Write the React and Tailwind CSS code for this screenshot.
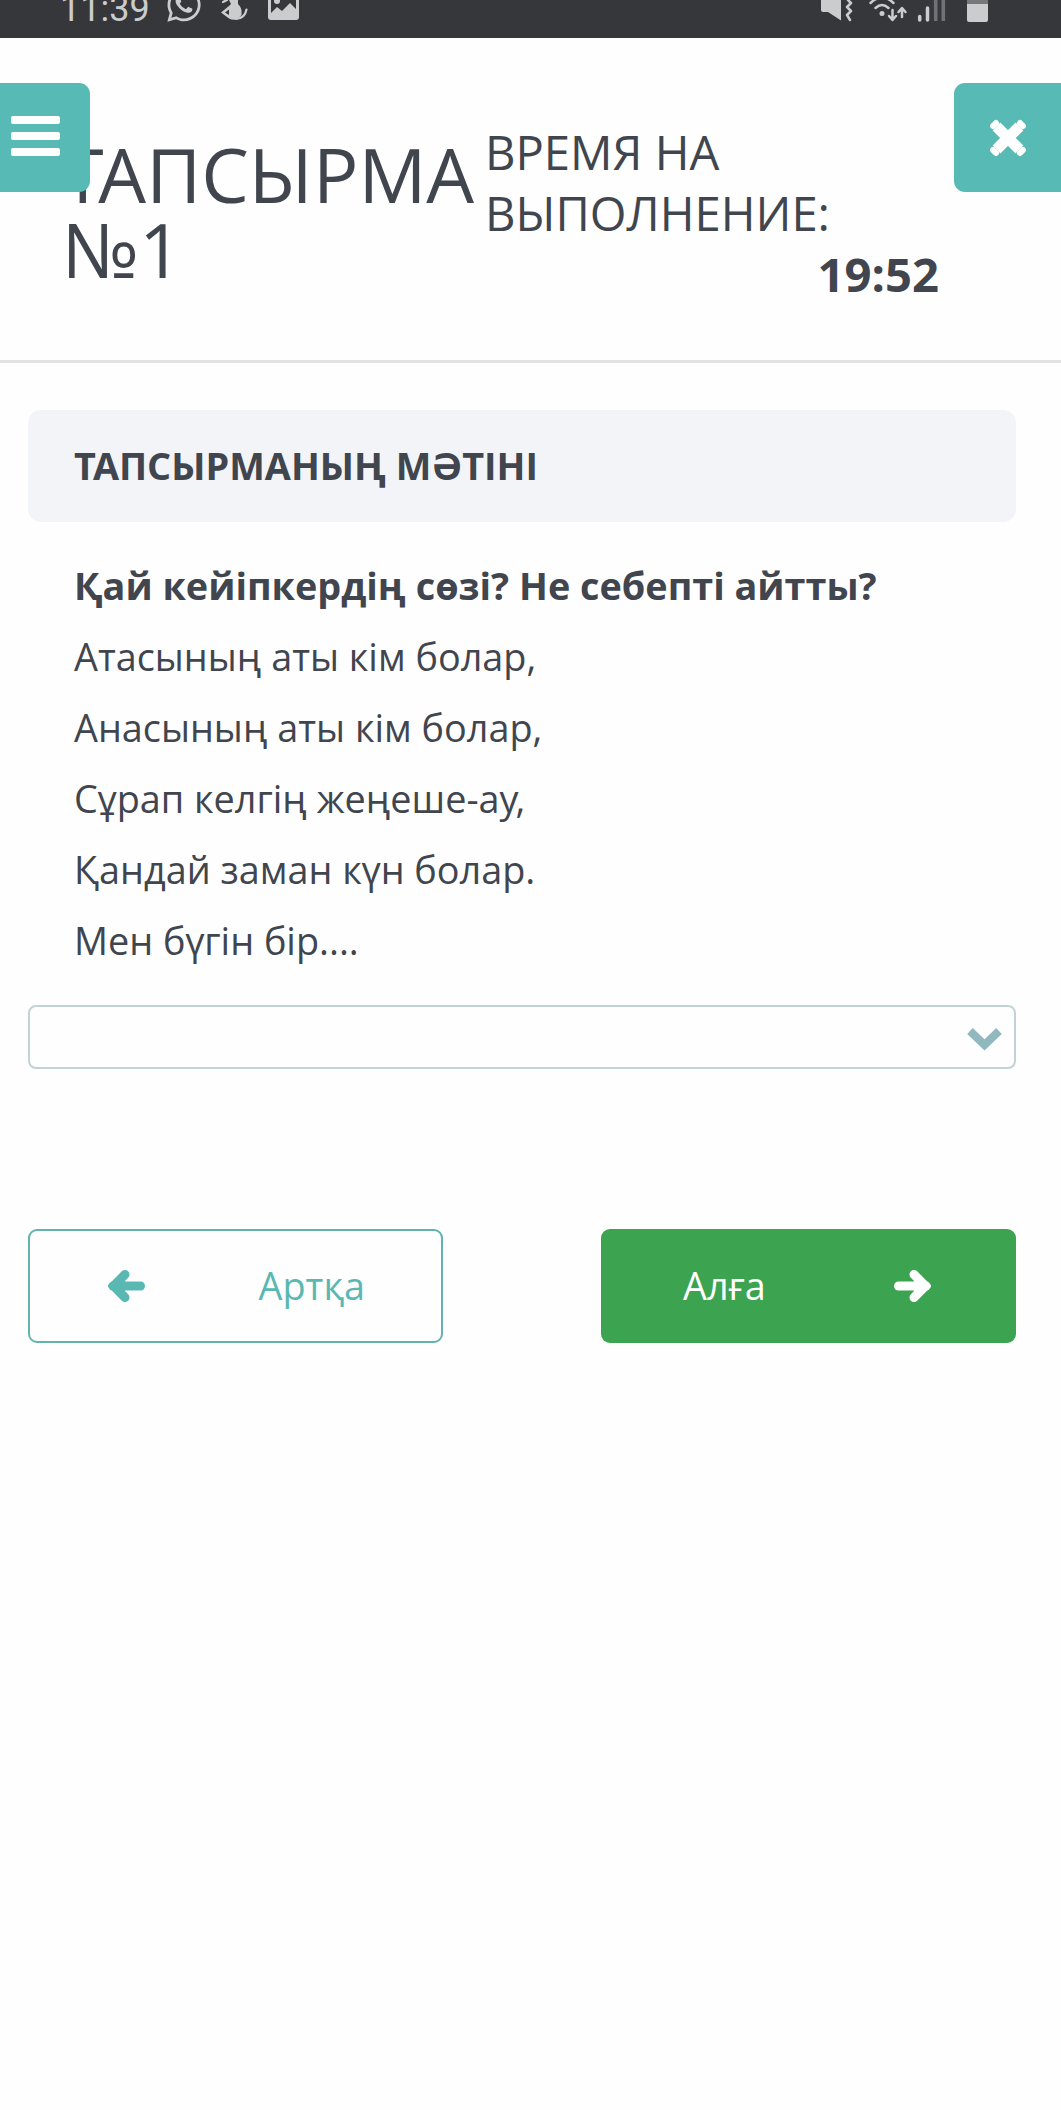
import { FaWhatsapp } from "react-icons/fa";

const lines = [
  "Атасының аты кім болар,",
  "Анасының аты кім болар,",
  <>Сұрап келгің жеңеше-а<span className="tracking-[-0.08em]">у</span>,</>,
  "Қандай заман күн болар.",
  "Мен бүгін бір....",
];

const Arrow = ({ className }) => (
  <svg className={className} width="37" height="32" viewBox="0 0 37 32" fill="none">
    <path d="M5 16H32.500" stroke="currentColor" strokeWidth="9" strokeLinecap="round" />
    <path d="M17 4.500L5.500 16L17 27.500" stroke="currentColor" strokeWidth="9" strokeLinecap="round" />
    <path d="M0 16L9 7V25Z" fill="currentColor" />
    <path d="M17 4.500L5.500 16L17 27.500Z" fill="currentColor" />
  </svg>
);

const StatusBar = () => (
  <div className="flex h-[38px] justify-between overflow-hidden bg-[#36373b] text-[#cbccce]">
    <div className="flex items-start pl-[60px]">
      <span className="-mt-[10px] w-[105px] font-['Roboto'] text-[36px] leading-[38px]">11:39</span>
      <FaWhatsapp className="-mt-[14px] size-[38px]" />
      <svg className="ml-[18px]" width="28" height="22" viewBox="0 0 28 22" fill="none">
        <path d="M8 0H17V4C20 7 21 10 20.500 15L17 18.500Q13 21 8 18.500L0 12.500L8 6L10 4Z" fill="currentColor" />
        <path d="M2 2L6 0M15 19C22 18.500 24.500 15 25.500 9.500" stroke="currentColor" strokeWidth="2.200" strokeLinecap="round" />
        <path d="M4 12.500L8 9.500V15Z" fill="#36373b" />
      </svg>
      <svg className="ml-[19px]" width="33" height="22" viewBox="0 0 33 22">
        <path d="M0 0H3V13L9 7L14 11L22 3L28 9V0H31V17Q31 20 28 20H3Q0 20 0 17Z" fill="currentColor" />
        <circle cx="9" cy="1" r="3" fill="currentColor" />
      </svg>
    </div>
    <svg width="240" height="38" viewBox="821 0 240 38" fill="none" stroke="currentColor">
      <path d="M821 0H841V20.500L828 12H823Q821 12 821 10Z" fill="currentColor" stroke="none" />
      <path d="M848 0L851 3L847 7L851 11L847 15L850 20" strokeWidth="2.500" strokeLinecap="round" strokeLinejoin="round" />
      <path d="M870.500 3Q882 -8 893.500 3M875.500 8Q882 2 888.500 8" strokeWidth="2.500" strokeLinecap="round" />
      <circle cx="882" cy="13.500" r="2.500" fill="currentColor" stroke="none" />
      <path d="M892.500 10V19M889 16L892.500 20L896 16M902 17V9M898.500 12L902 8L905.500 12" strokeWidth="2.500" strokeLinecap="round" strokeLinejoin="round" />
      <path d="M919.700 16.500V20M927.500 8V20" strokeWidth="3.500" strokeLinecap="round" />
      <path d="M935.700 0V21M943.300 0V21" stroke="#707176" strokeWidth="3.600" />
      <path d="M967 0H988V4H967Z" fill="#77787c" stroke="none" />
      <path d="M967 4H988V20Q988 22 986 22H969Q967 22 967 20Z" fill="currentColor" stroke="none" />
    </svg>
  </div>
);

const Header = () => (
  <header className="relative flex h-[325px] items-start border-b-[3px] border-[#e1e2e3] pl-[62px]">
    <h1 className="mt-[98px] w-[423px] whitespace-nowrap text-[75.6px] leading-[75px]">
      <span className="tracking-[-0.07em]">Т</span>АПСЫРМА
      <br />
      №1
    </h1>
    <div className="mt-[84px] w-[454px] text-[47.2px] leading-[61px]">
      <p>
        ВРЕМЯ НА
        <br />
        ВЫПОЛНЕНИЕ:
      </p>
      <p className="text-right font-bold">19:52</p>
    </div>
    <button className="absolute left-0 top-[45px] flex h-[109px] w-[90px] flex-col justify-center gap-2 rounded-r-[11px] bg-[#57bab5] pb-[3px] pl-[11px]">
      <span className="h-2 w-[49px] rounded-[2px] bg-white" />
      <span className="h-2 w-[49px] rounded-[2px] bg-white" />
      <span className="h-2 w-[49px] rounded-[2px] bg-white" />
    </button>
    <button className="absolute right-0 top-[45px] flex h-[109px] w-[107px] items-center justify-center rounded-l-[11px] bg-[#57bab5]">
      <svg width="38" height="38" viewBox="0 0 38 38" fill="none">
        <path d="M7.500 7.500L30.500 30.500M30.500 7.500L7.500 30.500" stroke="#fff" strokeWidth="11" />
        <path d="M7 4L4 7M31 4L34 7M7 34L4 31M31 34L34 31" stroke="#fff" strokeWidth="6" strokeLinecap="round" />
      </svg>
    </button>
  </header>
);

const App = () => {
  return (
    <div className="h-[2110px] w-[1061px] overflow-hidden bg-[#fefefe] font-['Open_Sans','Noto_Sans',sans-serif] text-[#40454e]">
      <StatusBar />
      <Header />
      <main className="ml-7 mt-[47px] w-[988px] text-[37.8px]">
        <h2 className="flex h-28 items-center rounded-[13px] bg-[#f3f4f8] pl-[46px] font-bold">
          <span className="tracking-[-0.08em]">Т</span>АПСЫРМАНЫҢ МӘТІНІ
        </h2>
        <div className="mt-7 pl-[46px] leading-[71px]">
          <p className="font-bold">Қай кейіпкердің сөзі? Не себепті айтты?</p>
          {lines.map((line, i) => (
            <p key={i}>{line}</p>
          ))}
        </div>
        <div className="mt-[29px] flex h-16 items-center justify-end rounded-[8px] border-2 border-[#c3d3d5] pr-3">
          <svg className="mt-1" width="35" height="23" viewBox="0 0 35 23" fill="none">
            <path d="M3 3L17.500 17L32 3" stroke="#91b8bf" strokeWidth="8" />
          </svg>
        </div>
        <div className="mt-40 flex justify-between">
          <button className="flex h-[114px] w-[415px] items-center justify-between rounded-[9px] border-2 border-[#62b3af] pl-[78px] pr-[76px] text-[#5ab8b3]">
            <Arrow />
            <span>Артқа</span>
          </button>
          <button className="flex h-[114px] w-[415px] items-center justify-between rounded-[9px] bg-[#3ca351] pl-[82px] pr-[85px] text-white">
            <span>Алға</span>
            <Arrow className="rotate-180" />
          </button>
        </div>
      </main>
    </div>
  );
};

export default App;
